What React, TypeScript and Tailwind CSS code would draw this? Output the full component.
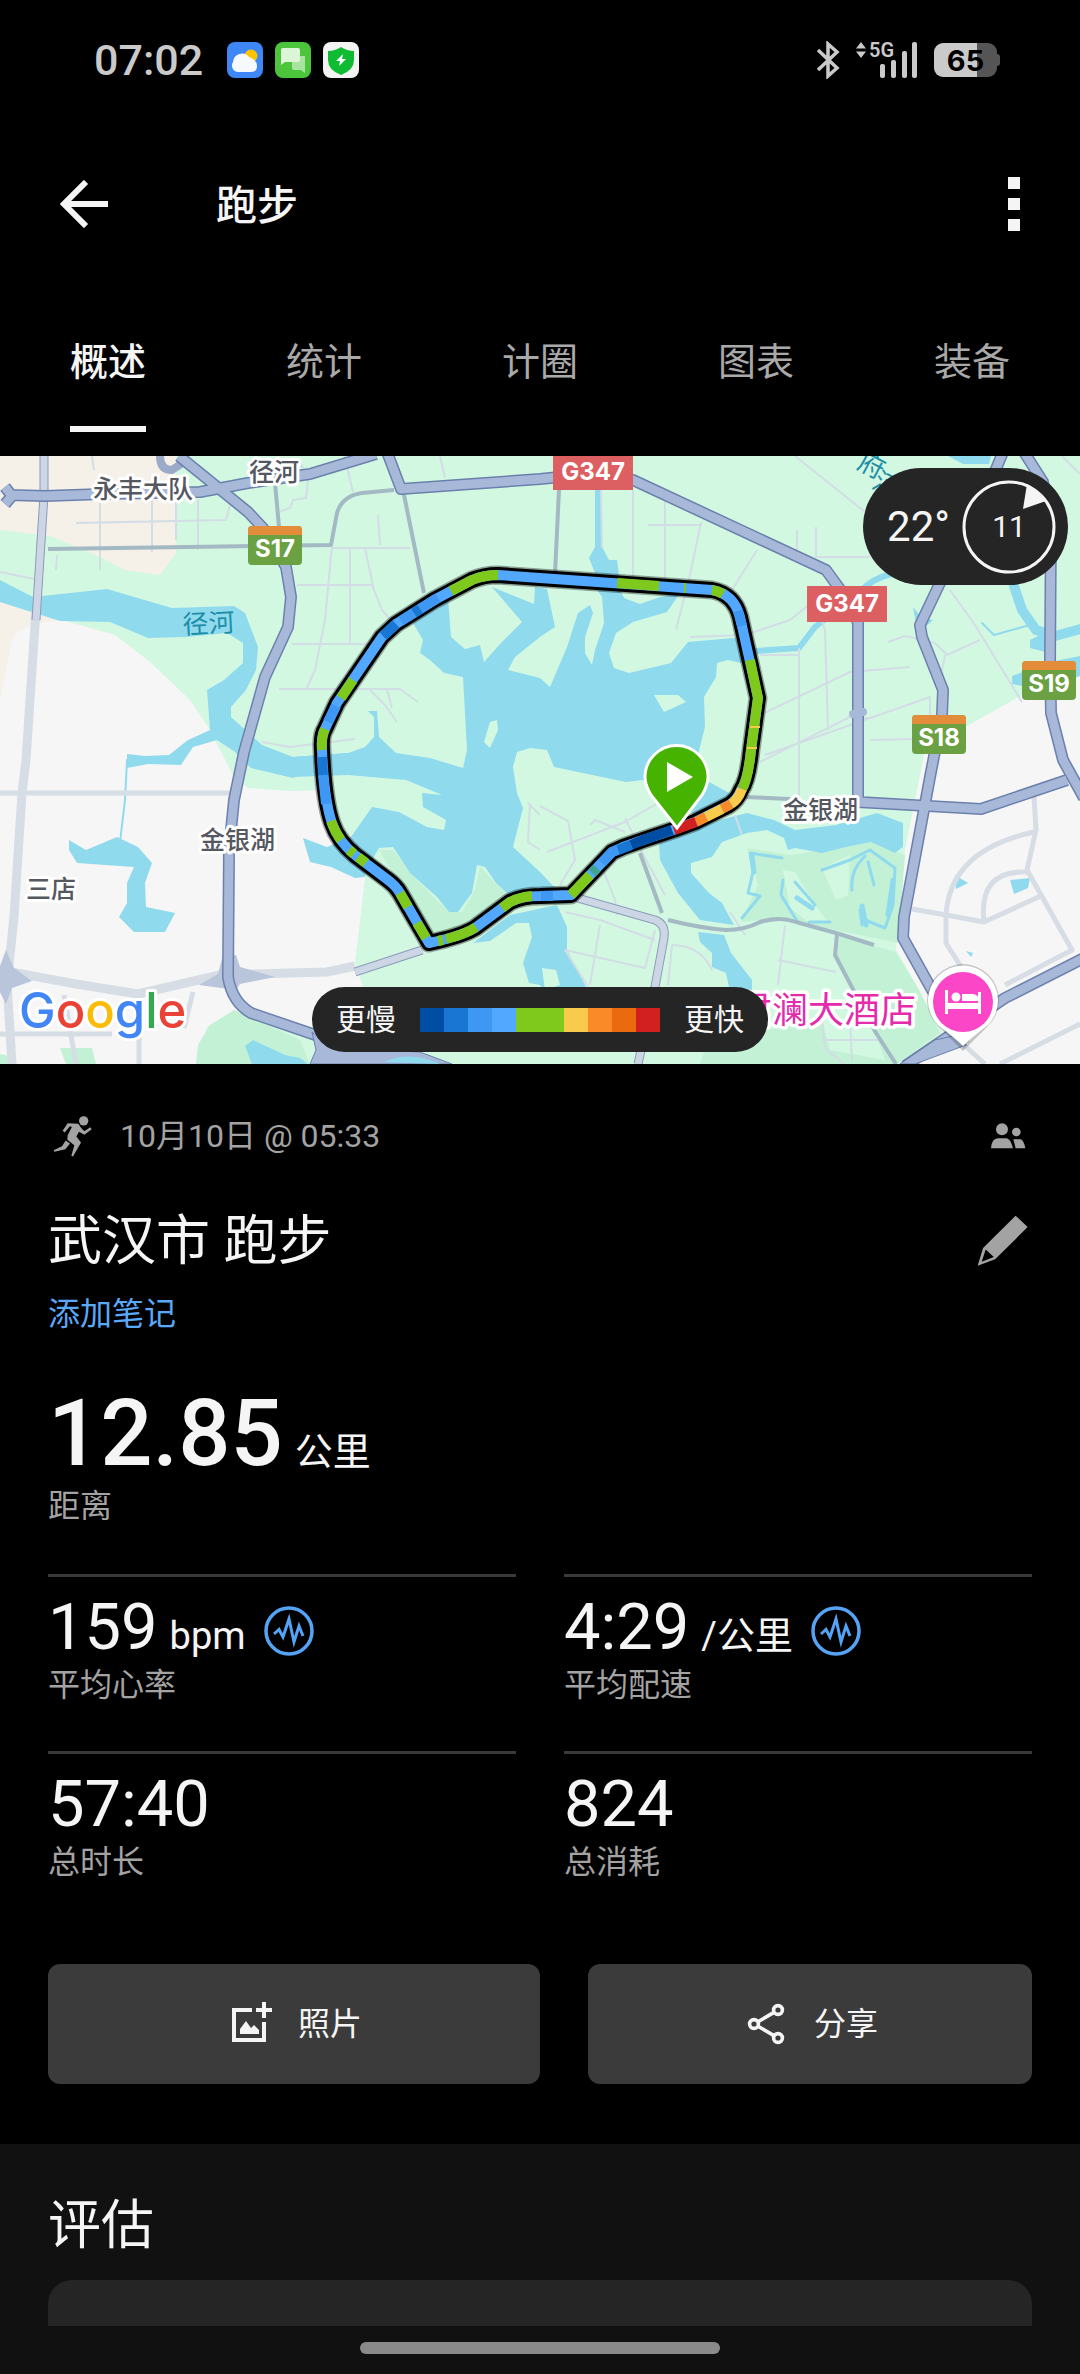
import type { ReactNode } from 'react';

const TABS = ['概述', '统计', '计圈', '图表', '装备'];

const PACE_COLORS = [
  '#004ea3', '#1976d2', '#3d97f3', '#52a8ff', '#7ec91c',
  '#7ec91c', '#f9cb4c', '#fa8a28', '#ea6a10', '#d22020',
];

const TRACK =
  'M673 830 L643 840 L623 847 L612 852 L571 895 L540 896 Q522 896 510 902 L475 928 Q462 936 429 943 L400 893 Q396 886 388 880 L355 855 Q338 841 332 823 Q324 800 322 750 Q321 735 325 729 L337 703 L382 637 L396 624 L434 600 L472 580 Q484 575 498 575 L540 578 L712 590 Q734 594 740 617 L758 698 L751 750 Q748 780 741 790 Q737 800 729 805 L695 822 L673 830';

// Pace segments that differ from the base colour of the track.
const SEGMENTS = [
  { color: '#004ea3', d: 'M672 830 L643 840 L631 845' },
  { color: '#1976d2', d: 'M631 845 L618 850' },
  { color: '#3d97f3', d: 'M618 850 L612 852 L602 863' },
  { color: '#3fa58e', d: 'M597 868 L592 873' },
  { color: '#7ec91c', d: 'M590 875 L571 895' },
  { color: '#3d97f3', d: 'M553 896 L541 896' },
  { color: '#7ec91c', d: 'M532 896 Q520 897 510 902 L502 908' },
  { color: '#7ec91c', d: 'M476 927 Q466 934 446 939' },
  { color: '#7ec91c', d: 'M443 940 L438 941' },
  { color: '#7ec91c', d: 'M426 938 L417 923' },
  { color: '#7ec91c', d: 'M408 907 L400 893' },
  { color: '#7ec91c', d: 'M366 863 L358 857' },
  { color: '#7ec91c', d: 'M354 854 L349 850' },
  { color: '#7ec91c', d: 'M341 840 Q335 832 331 821' },
  { color: '#3d97f3', d: 'M326 804 L323 775' },
  { color: '#1976d2', d: 'M323 775 L322 757' },
  { color: '#7ec91c', d: 'M322 750 Q321 738 325 729' },
  { color: '#3d97f3', d: 'M328 722 L336 706' },
  { color: '#7ec91c', d: 'M341 698 L353 680' },
  { color: '#1976d2', d: 'M383 636 L396 624' },
  { color: '#3d97f3', d: 'M401 621 L438 598' },
  { color: '#1976d2', d: 'M414 613 L420 609' },
  { color: '#7ec91c', d: 'M451 591 L472 580 Q484 575 498 575' },
  { color: '#7ec91c', d: 'M617 583 L659 586' },
  { color: '#7ec91c', d: 'M684 588 L686 588' },
  { color: '#7ec91c', d: 'M712 590 Q718 591 723 594' },
  { color: '#3d97f3', d: 'M738 611 L742 626' },
  { color: '#7ec91c', d: 'M750 660 L758 698 L751 750 Q748 780 742 789' },
  { color: '#f9cb4c', d: 'M755 726 L755 728' },
  { color: '#f9cb4c', d: 'M752 747 L752 749' },
  { color: '#f9cb4c', d: 'M742 789 Q738 800 731 804' },
  { color: '#fa8a28', d: 'M731 804 L722 809' },
  { color: '#f9cb4c', d: 'M722 809 L706 817' },
  { color: '#fa8a28', d: 'M706 817 L696 822' },
  { color: '#d22020', d: 'M696 822 L674 830' },
];

const MAJOR_ROADS = [
  'M179 456 L248 512 L263 528 L286 567 L291 597 L288 627 L265 677 L244 752 L234 800 L229 850 L228 977 Q232 1002 251 1013 L330 1040 L420 1062',
  'M5 487 L12 496 L5 504 M10 495 L45 496 L103 494 L200 492 L248 483 L310 474 L376 454',
  'M387 452 L401 489 L540 479 L560 477 L633 480 L826 570 L850 603 L858 623 L858 802 L981 809 L1067 780',
  'M1003 452 L975 520 L940 583 L920 625 L922 637 L943 690 L942 715 L930 777 L904 917 L903 938 L932 990 L964 1044',
  'M1024 452 L1043 482 L1051 520 L1050 663 L1051 713 L1063 760 L1084 798',
  'M1084 958 L1005 998 L905 1066',
];

const MID_ROADS = [
  'M48 549 L331 545 L337 513 Q342 496 362 493 L394 490',
  'M275 483 L279 527',
  'M403 490 L424 593',
  'M559 490 L555 574',
  'M640 853 L662 913',
  'M668 920 Q700 928 726 930 Q745 930 760 922 Q780 916 796 922 L836 933 L874 945',
  'M837 935 L835 955 L876 1033 L896 1064',
  'M745 797 L790 799',
];

const LIGHT_ROADS = [
  'M36 610 L26 760 L22 793 L14 917 L7 983 L12 1064',
  'M0 793 L231 793',
  'M0 970 L76 984 L138 994 L220 975 L327 972 L355 966',
  'M0 1034 L112 1034',
  'M139 995 L139 1064',
  'M64 995 L76 1064',
  'M193 992 L184 1028',
  'M912 909 L946 915 L984 922 L1043 895',
  'M1034 797 L1036 830 L1027 870 L1072 950 L1005 985',
  'M1034 832 Q950 850 946 915 L946 943 L963 970',
  'M984 922 Q978 870 1027 872',
  'M963 1044 L985 1064',
  'M1080 1024 L1000 1064',
];

const MINOR_ROADS = [
  'M76 523 L226 520 L230 505',
  'M100 496 L100 570 M94 470 L92 456 M152 500 L152 552 M176 540 L176 500 M198 500 L198 550',
  'M0 572 L34 579',
  'M57 555 L56 570',
  'M297 585 L372 585 L382 610 L395 625',
  'M292 644 L384 644',
  'M279 689 L400 689 L418 702 M370 690 L385 705 L397 722 M387 690 L392 708',
  'M332 545 L325 620 L315 670 L306 690',
  'M350 548 L350 644 M365 548 L374 590',
  'M332 548 L410 548 M380 545 L378 515',
  'M279 512 L290 508 L293 500 L306 498 L308 480 L300 462',
  'M345 456 L350 480 L353 492 M440 456 L445 478',
  'M262 742 L290 747 L355 739',
  'M601 490 L602 548 M633 490 L633 578 M665 500 L665 580 M648 525 L702 525 M701 522 L690 575 L676 630',
  'M757 550 L732 590 M797 530 L797 560 M816 527 L816 557 L870 557',
  'M690 637 L745 635 L790 620 L815 600 L825 630 L828 730',
  'M799 648 L799 800 M760 655 L799 655',
  'M760 715 L850 672 L910 667 M765 755 L930 697 L930 715 M760 762 L860 712',
  'M870 740 L915 739 M858 718 L873 718',
  'M795 456 L865 512',
  'M950 590 L975 625 L1022 702 M888 642 L905 636 L935 643 L947 655 L980 640 M945 655 L940 680',
  'M1062 456 L1080 474',
  'M540 806 L568 821 L575 860 L560 885 M547 852 L625 822 L680 790 M590 825 L595 820 L625 832',
  'M625 818 L645 858 L665 895 M600 862 L615 900 L617 915',
  'M565 912 L600 920 L655 940 M565 950 L645 968 L655 930 M600 925 L590 985 M565 950 L590 990',
  'M672 945 Q700 945 712 970 M672 945 L668 985',
  'M785 925 L778 985 M778 960 L836 972',
  'M730 912 L745 935',
  'M735 815 L742 835',
  'M822 1020 L825 1048 L845 1065 M850 1020 L852 1062 M822 1040 L880 1040',
  'M528 803 L540 815 M530 803 L528 842 L540 850',
];

const WATER = [
  // river in the west
  'M0 580 L33 597 L107 589 L172 608 L234 606 L245 613 L258 647 L256 670 L246 690 L231 707 L231 717 L262 745 L293 757 L348 753 L293 778 L251 768 L235 752 L217 740 L193 747 L181 765 L148 764 L127 768 L127 754 L145 756 L169 755 L188 740 L210 730 L207 690 L224 680 L243 663 L243 643 L227 633 L186 637 L148 638 L110 622 L60 621 L0 602Z',
  // pond by 三店
  'M69 840 L86 850 L117 837 L138 847 L152 863 L145 883 L146 907 L175 913 L165 932 L134 932 L119 917 L127 903 L127 883 L134 867 L77 863 L69 850Z',
  // main lake
  'M448 597 L451 637 L465 649 L480 645 L484 662 L501 643 L522 622 L492 587 L534 604 L535 587 L547 589 L555 627 L540 637 L515 657 L508 670 L540 678 L550 687 L567 647 L578 613 L590 605 L593 613 L585 637 L585 653 L592 665 L595 650 L604 623 L602 597 L592 583 L617 583 L624 598 L640 604 L660 597 L680 593 L667 612 L633 622 L616 633 L609 653 L614 668 L629 673 L671 663 L688 642 L733 638 L745 640 L750 665 L728 660 L717 663 L716 677 L704 697 L705 727 L698 755 L709 782 L733 795 L700 817 L665 800 L643 780 L626 782 L554 767 L547 750 L530 748 L517 752 L513 767 L517 793 L523 808 L513 847 L540 872 L557 890 L510 896 L496 883 L485 867 L477 865 L472 893 L458 912 L449 912 L437 897 L410 873 L393 847 L379 848 L366 870 L365 877 L355 878 L331 867 L310 862 L303 838 L327 847 L351 837 L372 807 L399 812 L427 827 L444 830 L446 820 L423 807 L422 793 L442 795 L406 780 L348 775 L293 777 L293 757 L348 753 L365 747 L374 737 L374 717 L368 711 L377 711 L379 737 L396 753 L430 758 L463 768 L467 750 L463 677 L444 673 L430 660 L420 653 L423 640 L413 623Z',
  // south arm
  'M473 943 L510 915 L557 905 L567 927 L567 950 L585 985 L600 1020 L560 1010 L540 985 L529 983 L523 963 L532 937 L529 923 L516 923 L490 941Z',
  // eastern arm
  'M659 843 L660 860 L678 893 L700 920 L734 925 L722 903 L709 893 L691 873 L691 863 L712 857 L722 842 L747 833 L767 830 L784 838 L788 850 L795 848 L822 853 L846 847 L871 842 L895 853 L903 847 L903 823 L877 813 L836 825 L795 830 L774 820 L747 813 L712 822Z',
  'M698 932 L724 935 L731 953 L752 980 L752 990 L729 987 L726 973 L712 967 L712 953 L700 942Z',
  'M595 490 L601 490 L602 547 L609 560 L617 560 L621 590 L595 590 L595 573 L589 558 L595 547Z',
  'M948 456 L991 456 L989 464 L963 464Z',
  'M1080 656 L1050 662 L1012 676 L1012 684 L1040 690 L1080 676Z',
  'M1030 640 L1050 630 L1046 652 L1030 648Z',
  'M245 1046 L253 1040 L285 1055 L300 1058 L308 1064 L252 1064Z',
  'M913 607 L922 618 L933 620 L918 634Z',
  'M955 875 L968 883 L956 889Z M1010 880 L1030 878 L1028 888 L1014 894Z M966 951 L973 953 L971 957Z',
];

function RoadShield({ x, y, label }: { x: number; y: number; label: string }) {
  return (
    <g>
      <rect x={x} y={y} width="54" height="39" rx="4" fill="#6ba143" />
      <path d={`M${x} ${y + 9} v-5 q0 -4 4 -4 h46 q4 0 4 4 v5Z`} fill="#e38d3a" />
      <text x={x + 27} y={y + 31} textAnchor="middle" fontSize="24" fontWeight="700" fill="#fff">
        {label}
      </text>
    </g>
  );
}

function HighwayShield({ x, y, label }: { x: number; y: number; label: string }) {
  return (
    <g>
      <rect x={x} y={y} width="80" height="36" fill="#dc6062" />
      <text x={x + 40} y={y + 26} textAnchor="middle" fontSize="24" fontWeight="700" fill="#fff">
        {label}
      </text>
    </g>
  );
}

function PlaceName({ x, y, children }: { x: number; y: number; children: ReactNode }) {
  return (
    <text x={x} y={y} fontSize="25" fontWeight="500" fill="#55585f" stroke="#fff" strokeWidth="6" strokeLinejoin="round" paintOrder="stroke">
      {children}
    </text>
  );
}

function RouteMap() {
  return (
    <svg viewBox="0 456 1080 608" preserveAspectRatio="xMidYMid slice" className="block h-full w-full" role="img" aria-label="路线地图">
      <rect x="0" y="456" width="1080" height="608" fill="#d3f8e2" />

      {/* land */}
      <path d="M0 456 H176 V553 L160 575 L125 570 L100 557 L50 536 L0 530Z" fill="#f5f0e8" />
      <path d="M0 602 L60 621 L20 640 L0 710Z" fill="#f5f0e8" />
      <path d="M0 700 L12 640 Q18 624 62 620 L115 635 L150 662 L190 700 L210 730 L220 750 L234 777 L248 788 L293 791 L325 790 L332 830 L365 878 L355 963 L363 987 L330 1030 L234 1013 L207 1027 L196 1064 H0Z" fill="#f6f6f6" />
      <path d="M1080 662 L1022 695 L969 725 L925 750 L905 850 L896 950 L919 990 L943 1033 L900 1064 H1080Z" fill="#f6f6f6" />
      <path d="M234 1010 L300 1040 L310 1064 H196 L198 1045 L210 1025Z M60 1048 H92 L96 1064 H66Z M0 1054 L10 1056 V1064 H0Z" fill="#c3f1d5" />
      <path d="M747 848 L790 855 L846 847 L871 842 L905 855 L898 943 L836 930 L781 918 L741 922 L758 885Z" fill="#c3f1d5" />
      <path d="M840 937 L896 952 L919 990 L940 1033 L896 1064 H700 L705 1050 L767 1030 L822 1020 L830 1050 L885 1060 L874 1030 L836 955Z" fill="#c3f1d5" />
      <path d="M379 850 L393 850 L410 873 L449 912 L462 912 L475 890 L480 866 L497 885 L510 896 L460 935 L432 940Z" fill="#c3f1d5" />
      <path d="M1000 998 L1024 985 L1024 990 L1000 1003Z" fill="#c3f1d5" />
      <path d="M783 870 L795 872 L815 905 L828 922 L808 922 L790 908Z M822 868 L850 855 L848 895 L836 900Z" fill="#d3f8e2" />

      {/* water */}
      {WATER.map((d) => (
        <path key={d} d={d} fill="#90daee" />
      ))}
      <path d="M490 722 L497 720 L498 730 L490 748 L484 742Z M654 695 L678 695 L686 702 L664 712Z M542 968 L556 970 L560 985 L545 990Z" fill="#d3f8e2" />
      <g fill="none" stroke="#90daee" strokeLinecap="round" strokeLinejoin="round">
        <path d="M127 760 L125 800 L120 842" strokeWidth="2" />
        <path d="M892 574 Q872 578 860 592 L815 627 L799 648 L755 651" strokeWidth="6" />
        <path d="M1012 580 L1022 610 L1036 630 L1055 636 L1084 628" strokeWidth="10" />
        <path d="M982 623 L994 635 L1030 625" strokeWidth="2" />
        <path d="M750 853 L753 872 L748 893 L760 896 L742 918 M750 853 L782 858 M783 880 L781 895 L797 921 M795 882 L815 905 M822 870 L850 860 L870 850 M809 922 H830 M852 890 Q850 870 865 856 M868 862 L874 885 M870 850 L895 868 L893 905 L885 928 L865 920 M860 910 L862 925" strokeWidth="3" />
        <path d="M752 856 L754 872 M797 898 L812 908 M862 906 L866 925 M893 880 L888 915" strokeWidth="5" />
      </g>

      {/* roads */}
      <g fill="none" strokeLinejoin="round">
        {MINOR_ROADS.map((d) => (
          <path key={d} d={d} stroke="#d3dde6" strokeWidth="2" />
        ))}
        {LIGHT_ROADS.map((d, i) => (
          <path key={d} d={d} stroke="#d6dde4" strokeWidth={i === 0 || i === 2 ? 9 : 5} />
        ))}
        {MID_ROADS.map((d) => (
          <path key={d} d={d} stroke="#a3b9c4" strokeWidth="4" />
        ))}
        <g>
          <path d="M44 456 L44 495 L36 620 M574 897 L655 920 Q666 924 664 938 L655 987 L638 1064 M355 972 L422 950" stroke="#8c9bb8" strokeWidth="9" />
          <path d="M44 456 L44 495 L36 620 M574 897 L655 920 Q666 924 664 938 L655 987 L638 1064 M355 972 L422 950" stroke="#cdd6e5" strokeWidth="7" />
        </g>
        <path d="M160 456 Q160 470 172 470 L190 458" stroke="#9aaac8" strokeWidth="8" />
        <path d="M199 985 L218 974 L223 955 L236 955 L240 967 L275 977 L240 984 L236 990Z M0 966 L6 950 L14 968 L32 981 L12 988 L6 1004 L0 992Z" fill="#b9c5da" stroke="none" />
        {MAJOR_ROADS.map((d) => (
          <path key={d} d={d} stroke="#6b80ad" strokeWidth="12" />
        ))}
        {MAJOR_ROADS.map((d) => (
          <path key={d} d={d} stroke="#a7b8d8" strokeWidth="9" />
        ))}
        <path d="M312 1032 L330 1048 L420 1052 L452 1064 H310 L316 1050Z M900 1064 L935 1040 L962 1034 L966 1045 L915 1064Z" fill="#a7b8d8" stroke="#6b80ad" />
        <path d="M384 1062 Q410 1050 440 1064Z" fill="#90daee" />
        <circle cx="853" cy="714" r="4" fill="#a7b8d8" />
        <circle cx="863" cy="712" r="4" fill="#a7b8d8" />
      </g>

      {/* labels */}
      <PlaceName x={93} y={498}>永丰大队</PlaceName>
      <PlaceName x={249} y={481}>径河</PlaceName>
      <PlaceName x={200} y={849}>金银湖</PlaceName>
      <PlaceName x={26} y={898}>三店</PlaceName>
      <PlaceName x={783} y={819}>金银湖</PlaceName>
      <g fontSize="26" fill="#1c8fa8">
        <text x="183" y="634" transform="rotate(-3 183 634)">径河</text>
        <text x="858" y="474" transform="rotate(28 870 466)">府</text>
        <text x="873" y="494" transform="rotate(28 886 486)">河</text>
      </g>
      <text x="916" y="1023" textAnchor="end" fontSize="36" fill="#e32bab" stroke="#fff" strokeWidth="7" strokeLinejoin="round" paintOrder="stroke">
        君澜大酒店
      </text>
      <g fontFamily="Inter, sans-serif">
        <HighwayShield x={553} y={454} label="G347" />
        <HighwayShield x={807} y={586} label="G347" />
        <RoadShield x={248} y={526} label="S17" />
        <RoadShield x={912} y={715} label="S18" />
        <RoadShield x={1022} y={661} label="S19" />
      </g>

      {/* recorded route */}
      <g fill="none" strokeLinejoin="round">
        <path d={TRACK} stroke="#000" strokeOpacity="0.35" strokeWidth="19" />
        <path d={TRACK} stroke="#000" strokeWidth="16" />
        <path d={TRACK} stroke="#52a8ff" strokeWidth="10" />
        {SEGMENTS.map((s) => (
          <path key={s.d} d={s.d} stroke={s.color} strokeWidth="10" />
        ))}
      </g>

      {/* start marker */}
      <path d="M677 828 L651 795 Q645 785 645 777 A31 31 0 0 1 708 777 Q708 785 702 795Z" fill="#45b300" stroke="#fff" strokeWidth="3" />
      <path d="M667 762 L693 777 L667 792Z" fill="#fff" />

      {/* hotel marker */}
      <path d="M963 1047 L938 1022 A36 36 0 1 1 988 1022Z" fill="#000" opacity="0.2" transform="translate(0 4)" />
      <path d="M963 1046 Q955 1038 938 1025 A35 35 0 1 1 988 1025 Q971 1038 963 1046Z" fill="#fff" />
      <circle cx="963" cy="1002" r="30" fill="#fb46c8" />
      <path d="M945 990 h3 v13 h30 v-11 h3 v22 h-3 v-5 h-30 v5 h-3Z" fill="#fff" />
      <circle cx="956" cy="997" r="4.5" fill="#fff" />
      <path d="M962 1001 V994 H972 Q979 994 979 1001Z" fill="#fff" />

      <text x="19" y="1028" fontFamily="Inter, sans-serif" fontSize="49" fontWeight="500" stroke="#fff" strokeWidth="6" strokeLinejoin="round" paintOrder="stroke">
        <tspan fill="#4285f4">G</tspan><tspan fill="#ea4335">o</tspan><tspan fill="#fbbc05">o</tspan><tspan fill="#4285f4">g</tspan><tspan fill="#34a853">l</tspan><tspan fill="#ea4335">e</tspan>
      </text>
    </svg>
  );
}

function StatusBar() {
  return (
    <div className="flex h-[120px] items-center pr-20 pl-[94px] text-[#cacaca]">
      <span className="text-[43px] leading-[48px] font-medium">07:02</span>
      <div className="ml-6 flex gap-3">
        <svg viewBox="0 0 36 36" className="size-9">
          <rect width="36" height="36" rx="8" fill="#3f86f7" />
          <circle cx="24" cy="14" r="6.5" fill="#ffc400" />
          <path d="M11 30 A6.500 6.500 0 0 1 6 20 A9 9 0 0 1 22 15 Q30 18 30 24 Q30 30 24 30Z" fill="#f6f9fd" />
        </svg>
        <svg viewBox="0 0 36 36" className="size-9">
          <rect width="36" height="36" rx="8" fill="#4cc53c" />
          <path d="M17 14 H30 V31 L26 28 H19 Q17 28 17 26Z" fill="#a9e3a0" />
          <path d="M8 6 H23 Q25 6 25 8 V18 Q25 20 23 20 H10 L6 23 V8 Q6 6 8 6Z" fill="#dcf5d8" />
        </svg>
        <svg viewBox="0 0 36 36" className="size-9">
          <rect width="36" height="36" rx="8" fill="#f3f3f3" />
          <path d="M18 5 Q24 9 31 9 V18 Q31 28 18 33 Q5 28 5 18 V9 Q12 9 18 5Z" fill="#10bb34" />
          <path d="M20 12 L13 19 H17 L16 24 L23 17 H19Z" fill="#fff" />
        </svg>
      </div>

      <svg viewBox="0 0 24 38" className="ml-auto h-[38px] w-6" fill="none" stroke="currentColor" strokeWidth="3.500">
        <path d="M2 9 L21 27 L12 35 V3 L21 11 L2 29" />
      </svg>
      <div className="ml-4 flex h-[38px] w-[62px] items-start">
        <svg viewBox="0 0 10 16" className="mt-px h-4 w-[10px]" fill="currentColor">
          <path d="M0 6.500 L5 0 L10 6.500Z M0 9.500 L5 16 L10 9.500Z" />
        </svg>
        <div className="relative h-full flex-1">
          <span className="absolute top-0 left-[3px] text-[20px] leading-[18px] font-semibold">5G</span>
          <svg viewBox="0 0 38 38" className="absolute right-0 bottom-0 size-[38px]" fill="currentColor">
            <rect x="0" y="23" width="5" height="14" rx="2" />
            <rect x="11" y="19" width="5" height="18" rx="2" />
            <rect x="22" y="10" width="5" height="27" rx="2" />
            <rect x="32" y="1" width="5" height="36" rx="2" />
          </svg>
        </div>
      </div>
      <div className="ml-4 flex items-center">
        <div className="h-[34px] w-[63px] rounded-[9px] bg-linear-to-r from-[#cacaca] from-68% to-[#555] to-68% text-center font-[Inter] text-[29px] leading-[35px] font-bold text-black">
          65
        </div>
        <div className="h-3 w-[3px] rounded-r-sm bg-[#555]" />
      </div>
    </div>
  );
}

function TrendIcon() {
  return (
    <svg viewBox="0 0 50 50" className="size-[50px]" fill="none" stroke="#55a3f5">
      <circle cx="25" cy="25" r="23" strokeWidth="3.500" />
      <path d="M10 28 L15 23.500 L19 31 L25 13 L30 36 L35 20 L39 30" strokeWidth="3" />
    </svg>
  );
}

type StatProps = { value: string; unit?: string; label: string; trend?: boolean };

function Stat({ value, unit, label, trend }: StatProps) {
  return (
    <div className="border-t-3 border-[#3a3a3a] pt-4 pb-[42px]">
      <div className="flex h-[68px] items-center gap-[18px]">
        <div className="flex items-baseline gap-3">
          <span className="text-[65px] leading-[68px]">{value}</span>
          {unit && <span className="text-[38px] leading-[48px]">{unit}</span>}
        </div>
        {trend && (
          <button type="button" aria-label={`${label}趋势`} className="pt-2">
            <TrendIcon />
          </button>
        )}
      </div>
      <div className="text-[32px] leading-[48px] text-[#a3a3a3]">{label}</div>
    </div>
  );
}

export default function App() {
  return (
    <div className="min-h-screen w-full bg-black font-['Roboto','Noto_Sans_CJK_SC',sans-serif] text-[#f5f5f5]">
      <StatusBar />

      <header className="flex h-[168px] items-center pr-[60px] pl-[60px]">
        <button type="button" aria-label="返回">
          <svg viewBox="0 0 48 48" className="size-12" fill="none" stroke="currentColor" strokeWidth="6">
            <path d="M26 2 L4 24 L26 46 M4 24 H48" />
          </svg>
        </button>
        <h1 className="ml-[108px] pt-1 text-[41px] leading-[48px] font-medium">跑步</h1>
        <button type="button" aria-label="更多" className="ml-auto flex flex-col gap-[9px]">
          <span className="size-3 bg-current" />
          <span className="size-3 bg-current" />
          <span className="size-3 bg-current" />
        </button>
      </header>

      <nav className="grid grid-cols-5 pt-[50px] pb-6">
        {TABS.map((tab, i) => (
          <button
            key={tab}
            type="button"
            className={`justify-self-center border-b-6 pb-10 text-[38px] leading-[48px] ${
              i === 0 ? 'border-[#f5f5f5] font-medium' : 'border-transparent text-[#a9a9a9]'
            }`}
          >
            {tab}
          </button>
        ))}
      </nav>

      <section className="relative h-[608px] overflow-hidden">
        <RouteMap />
        <div className="absolute top-3 right-3 flex h-[117px] items-center gap-3 rounded-full bg-[#252525] pr-[12px] pl-6">
          <span className="text-[42px] leading-[48px]">22°</span>
          <div className="relative flex size-[94px] items-center justify-center text-[30px] leading-9">
            <svg viewBox="0 0 94 94" className="absolute inset-0 size-full" fill="none">
              <circle cx="47" cy="47" r="45" stroke="#f5f5f5" strokeWidth="3" />
              <path d="M65 4 L61 29 L84 21 Q77 10 65 4Z" fill="#f5f5f5" />
            </svg>
            11
          </div>
        </div>
        <div className="absolute inset-x-0 bottom-3 flex justify-center">
          <div className="flex h-[65px] items-center gap-6 rounded-full bg-[#252525] px-6 text-[30px] leading-9">
            <span>更慢</span>
            <div className="flex">
              {PACE_COLORS.map((color, i) => (
                <span key={i} className="h-6 w-6" style={{ backgroundColor: color }} />
              ))}
            </div>
            <span>更快</span>
          </div>
        </div>
      </section>

      <main className="px-12 pt-12 pb-[60px]">
        <div className="flex h-12 items-center text-[32px] leading-[48px] text-[#a3a3a3]">
          <svg viewBox="40 44 120 128" className="ml-[5px] h-[43px] w-10" fill="currentColor">
            <circle cx="132" cy="61" r="14" />
            <path d="M84 68 L116 70 L124 82 L134 92 L152 80 L156 86 L134 103 L118 94 L110 108 L124 126 L100 168 L95 166 L104 134 L83 118 L84 104 L97 79 L90 78 L75 96 L69 91Z" />
            <path d="M78 120 L91 129 L77 146 L44 154 L42 149 L67 137Z" />
          </svg>
          <span className="ml-[27px]">10月10日 @ 05:33</span>
          <svg viewBox="90 68 108 84" className="mr-[6px] ml-auto h-7 w-9" fill="currentColor">
            <circle cx="126" cy="90" r="18" />
            <circle cx="169" cy="98" r="13" />
            <path d="M93 147 Q95 117 114 117 H140 Q152 119 159 147Z M160 120 H182 Q192 124 196 147 H167Z" />
          </svg>
        </div>

        <div className="mt-[46px] flex items-center justify-between">
          <h2 className="text-[54px] leading-[72px]">武汉市 跑步</h2>
          <button type="button" aria-label="编辑" className="mr-1 pb-1 text-[#a3a3a3]">
            <svg viewBox="50 338 152 152" className="size-[51px]" fill="currentColor" fillRule="evenodd">
              <path d="M165 340 L201 374 L104 470 L52 489 L68 436Z M76 441 L64 477 L100 463Z" />
            </svg>
          </button>
        </div>
        <a href="#note" className="mt-3 inline-block text-[32px] leading-[48px] text-[#5aa9f8]">
          添加笔记
        </a>

        <div className="mt-12 flex items-baseline gap-3">
          <span className="text-[92px] leading-[96px] font-medium">12.85</span>
          <span className="text-[38px] leading-[48px]">公里</span>
        </div>
        <div className="text-[32px] leading-[48px] text-[#a3a3a3]">距离</div>

        <div className="mt-11 grid grid-cols-2 gap-x-12">
          <Stat value="159" unit="bpm" label="平均心率" trend />
          <Stat value="4:29" unit="/公里" label="平均配速" trend />
          <Stat value="57:40" label="总时长" />
          <Stat value="824" label="总消耗" />
        </div>

        <div className="mt-9 grid grid-cols-[492fr_444fr] gap-12 text-[32px] leading-[48px]">
          <button type="button" className="flex h-[120px] items-center justify-center gap-6 rounded-xl bg-[#3b3b3b]">
            <svg viewBox="0 0 24 24" className="size-12" fill="none" stroke="currentColor" strokeWidth="2">
              <path d="M13 5 H4 V20 H19 V11 M19 1 V9 M15 5 H23" />
              <path d="M7 17 V14.500 L10 10.500 L12.500 14 L14 12.500 L16.500 15 V17Z" fill="currentColor" stroke="none" />
            </svg>
            照片
          </button>
          <button type="button" className="flex h-[120px] items-center justify-center gap-6 rounded-xl bg-[#3b3b3b]">
            <svg viewBox="0 0 24 24" className="size-12" fill="none" stroke="currentColor" strokeWidth="1.800">
              <circle cx="18" cy="5" r="2.200" />
              <circle cx="6" cy="12" r="2.200" />
              <circle cx="18" cy="19" r="2.200" />
              <path d="M8 10.900 L16 6.200 M8 13.100 L16 17.800" />
            </svg>
            分享
          </button>
        </div>
      </main>

      <section className="bg-[#111] px-12 pt-[46px]">
        <h2 className="text-[53px] leading-[72px]">评估</h2>
        <div className="mt-[18px] h-[46px] rounded-t-3xl bg-[#252525]" />
        <div className="flex justify-center pt-4 pb-5">
          <div className="h-3 w-[360px] rounded-full bg-[#8a8a8a]" />
        </div>
      </section>
    </div>
  );
}
